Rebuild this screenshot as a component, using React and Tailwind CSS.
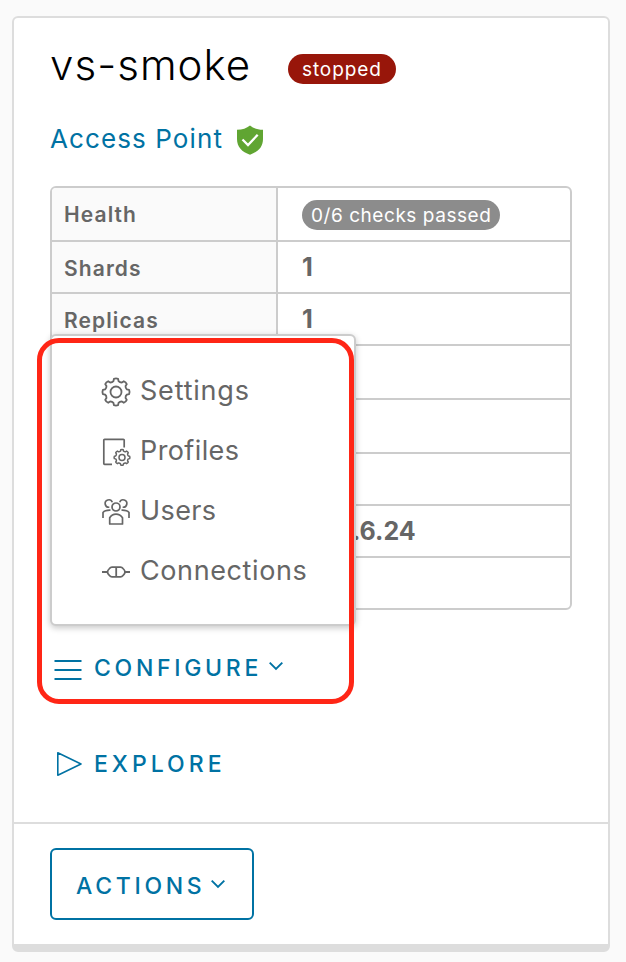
const sans = "font-['Inter','Liberation_Sans',sans-serif]";

// Outline of an eight-toothed gear centred on the origin.
function gearPath(r) {
  const pt = (radius, deg) => {
    const a = (deg * Math.PI) / 180;
    return `${(radius * Math.cos(a)).toFixed(2)} ${(radius * Math.sin(a)).toFixed(2)}`;
  };
  let d = "";
  for (let i = 0; i < 8; i += 1) {
    const a = i * 45;
    d += `${i ? "L" : "M"}${pt(r * 0.97, a - 9)}Q${pt(r * 1.02, a)} ${pt(r * 0.97, a + 9)}`;
    d += `L${pt(r * 0.82, a + 13)}Q${pt(r * 0.74, a + 22.5)} ${pt(r * 0.82, a + 32)}`;
  }
  return `${d}Z`;
}

function GearIcon() {
  return (
    <svg className="h-[30px] w-[30px]" viewBox="-15 -15 30 30" fill="none" stroke="currentColor" strokeWidth="1.8" strokeLinejoin="round">
      <path d={gearPath(13.7)} />
      <circle r="5.5" />
    </svg>
  );
}

function ProfileIcon() {
  return (
    <svg className="h-[30px] w-[30px]" viewBox="0 0 30 30" fill="none" stroke="currentColor" strokeWidth="1.7" strokeLinejoin="round">
      <path d="M11 27.3H3.6Q2.8 27.3 2.8 26.5V3Q2.8 2.3 3.6 2.3H22.3Q23.2 2.3 23.2 3V10.5" />
      <g transform="translate(21 20.4)" strokeWidth="1.5">
        <path d={gearPath(8)} />
        <circle r="3" />
      </g>
    </svg>
  );
}

function UsersIcon() {
  return (
    <svg className="h-[30px] w-[30px]" viewBox="0 0 30 30" fill="none" stroke="currentColor" strokeWidth="1.7">
      <circle cx="15" cy="10" r="4" />
      <path d="M8.7 27V20.8Q11 17.2 15 17.2T21.5 20.8V27Z" strokeLinejoin="round" />
      <path d="M11.3 5.200A3.700 3.700 0 1 0 8.300 10.200M18.700 5.200A3.700 3.700 0 1 1 21.700 10.200" />
      <path d="M2 21V15.5Q4 13 9.5 13.2M28 21V15.5Q26 13 20.5 13.2" />
    </svg>
  );
}

function ConnectIcon() {
  return (
    <svg className="h-[30px] w-[30px]" viewBox="0 0 30 30" fill="none" stroke="currentColor" strokeWidth="1.8">
      <path d="M1 15H6.500M24 15H29M15.200 10.200V19.800" />
      <path d="M11 10.200H19.500Q21 10.200 22 11.500Q24.400 14 23.800 15Q24.400 16 22 18.500Q21 19.800 19.500 19.800H11Q9.500 19.800 8.500 18.500Q6.100 16 6.700 15Q6.100 14 8.500 11.500Q9.500 10.200 11 10.200Z" strokeLinejoin="round" />
    </svg>
  );
}

function Chevron() {
  return (
    <svg className="h-2.5 w-4" viewBox="0 0 16 10" fill="none" stroke="currentColor" strokeWidth="1.9">
      <path d="M1.7 1.7L8 8L14.3 1.7" />
    </svg>
  );
}

const rows = [
  { label: "Health", h: "h-[54px]", health: true },
  { label: "Shards", h: "h-[52px]", value: "1" },
  { label: "Replicas", h: "h-[52px]", value: "1" },
  { h: "h-[54px]" },
  { h: "h-[54px]" },
  { h: "h-[52px]" },
  { h: "h-[52px]", value: ".6.24", inset: "pl-[74px]" },
  { h: "h-[50px]", last: true },
];

const items = [
  { Icon: GearIcon, label: "Settings", tracking: "tracking-[0.8px]" },
  { Icon: ProfileIcon, label: "Profiles", tracking: "tracking-[0.4px]" },
  { Icon: UsersIcon, label: "Users", tracking: "tracking-[0.4px]" },
  { Icon: ConnectIcon, label: "Connections", tracking: "tracking-[0.6px]" },
];

export default function App() {
  return (
    <div className={`h-[962px] w-[626px] overflow-hidden bg-[#fafafa] pt-4 pl-3 text-[#666] ${sans}`}>
      <div className="flex h-[936px] w-[598px] flex-col rounded-md border-2 border-b-8 border-[#ddd] bg-white">
        <div className="flex h-[804px] flex-col pl-9">
          <div className="mt-[22px] flex h-[50px] items-start">
            <h1 className="w-[238px] text-[42px] leading-[50px] font-light tracking-[1.05px] text-black">vs-smoke</h1>
            <span className="mt-[14px] h-[30px] w-[108px] rounded-full bg-[#98160a] pt-px pl-[14px] text-[19px] leading-[30px] tracking-[0.9px] text-white">stopped</span>
          </div>
          <div className="mt-8 flex h-[34px] items-center text-[#0072a3]">
            <a className="w-[186px] text-[26px] leading-[34px] tracking-[1.1px]">Access Point</a>
            <svg className="mt-px h-[30px] w-[28px]" viewBox="0 0 28 30">
              <path d="M14 .4C10.500 3.200 6.500 4.600 1 4.800V14C1 22 6 27 14 29.700C22 27 27 22 27 14V4.800C21.500 4.600 17.500 3.200 14 .4Z" fill="#60a532" />
              <path d="M6.500 14.500L12 20L21.700 9.800" fill="none" stroke="#fff" strokeWidth="2.300" />
            </svg>
          </div>
          <div className="relative mt-[30px] h-[424px] w-[522px]">
            <div className="flex h-[424px] flex-col overflow-hidden rounded-md border-2 border-[#ccc]">
              {rows.map((row, i) => (
                <div key={i} className={`flex shrink-0 border-[#ccc] ${row.h} ${row.last ? "" : "border-b-2"}`}>
                  <div className={`flex w-[226px] items-center border-r-2 border-[#ccc] bg-[#fafafa] pl-3 text-[21px] font-semibold tracking-[1.1px] ${row.health ? "pt-0.5" : "pt-1"}`}>
                    {row.label}
                  </div>
                  <div className={`flex items-center text-[25px] font-bold ${row.health ? "pt-0.5" : "pt-[1.5px]"} ${row.inset || "pl-6"}`}>
                    {row.health ? (
                      <span className="h-[30px] w-[198px] rounded-full bg-[#8c8c8c] pt-px pl-[9px] text-[19px] leading-[29px] font-normal tracking-[0.55px] text-white">0/6 checks passed</span>
                    ) : (
                      row.value
                    )}
                  </div>
                </div>
              ))}
            </div>
            <div className="absolute top-[148px] left-0 flex h-[292px] w-[306px] flex-col rounded-md border-2 border-[#ccc] bg-white pt-6 pl-[49px] shadow-[0_2px_6px_rgba(0,0,0,0.22)]">
              {items.map(({ Icon, label, tracking }) => (
                <div key={label} className="flex h-[60px] items-center">
                  <span className="mt-[3px] mr-[9px]"><Icon /></span>
                  <span className={`pt-0.5 text-[27px] ${tracking}`}>{label}</span>
                </div>
              ))}
            </div>
            <div className="absolute top-[152px] -left-[13px] h-[366px] w-[317px] rounded-[22px] border-[5px] border-[#ff2616]" />
          </div>
          <a className="mt-[38px] flex h-10 items-center text-[23px] font-medium tracking-[3.7px] text-[#0072a3]">
            <svg className="mt-1 mr-3 ml-1 h-6 w-7" viewBox="0 0 28 24" fill="none" stroke="currentColor" strokeWidth="1.800">
              <path d="M0.500 3H27.500M0.500 12H27.500M0.500 21H27.500" />
            </svg>
            <span className="w-[174px]">CONFIGURE</span>
            <span className="-mt-1 flex"><Chevron /></span>
          </a>
          <a className="mt-14 flex h-10 items-center text-[23px] font-medium tracking-[4px] text-[#0072a3]">
            <svg className="mr-3 ml-1 h-7 w-7" viewBox="0 0 28 28" fill="none" stroke="currentColor" strokeWidth="1.600" strokeLinejoin="round">
              <path d="M3.800 2.800L27 14L3.800 25.200Z" />
            </svg>
            EXPLORE
          </a>
        </div>
        <div className="flex-1 border-t-2 border-[#ddd] pt-6 pl-9">
          <button className="flex h-[72px] w-[204px] items-center rounded-md border-2 border-[#0072a3] pl-6 text-[23px] font-medium tracking-[3.7px] text-[#0072a3]">
            <span className="w-[134px] pt-1 text-left">ACTIONS</span>
            <Chevron />
          </button>
        </div>
      </div>
    </div>
  );
}
